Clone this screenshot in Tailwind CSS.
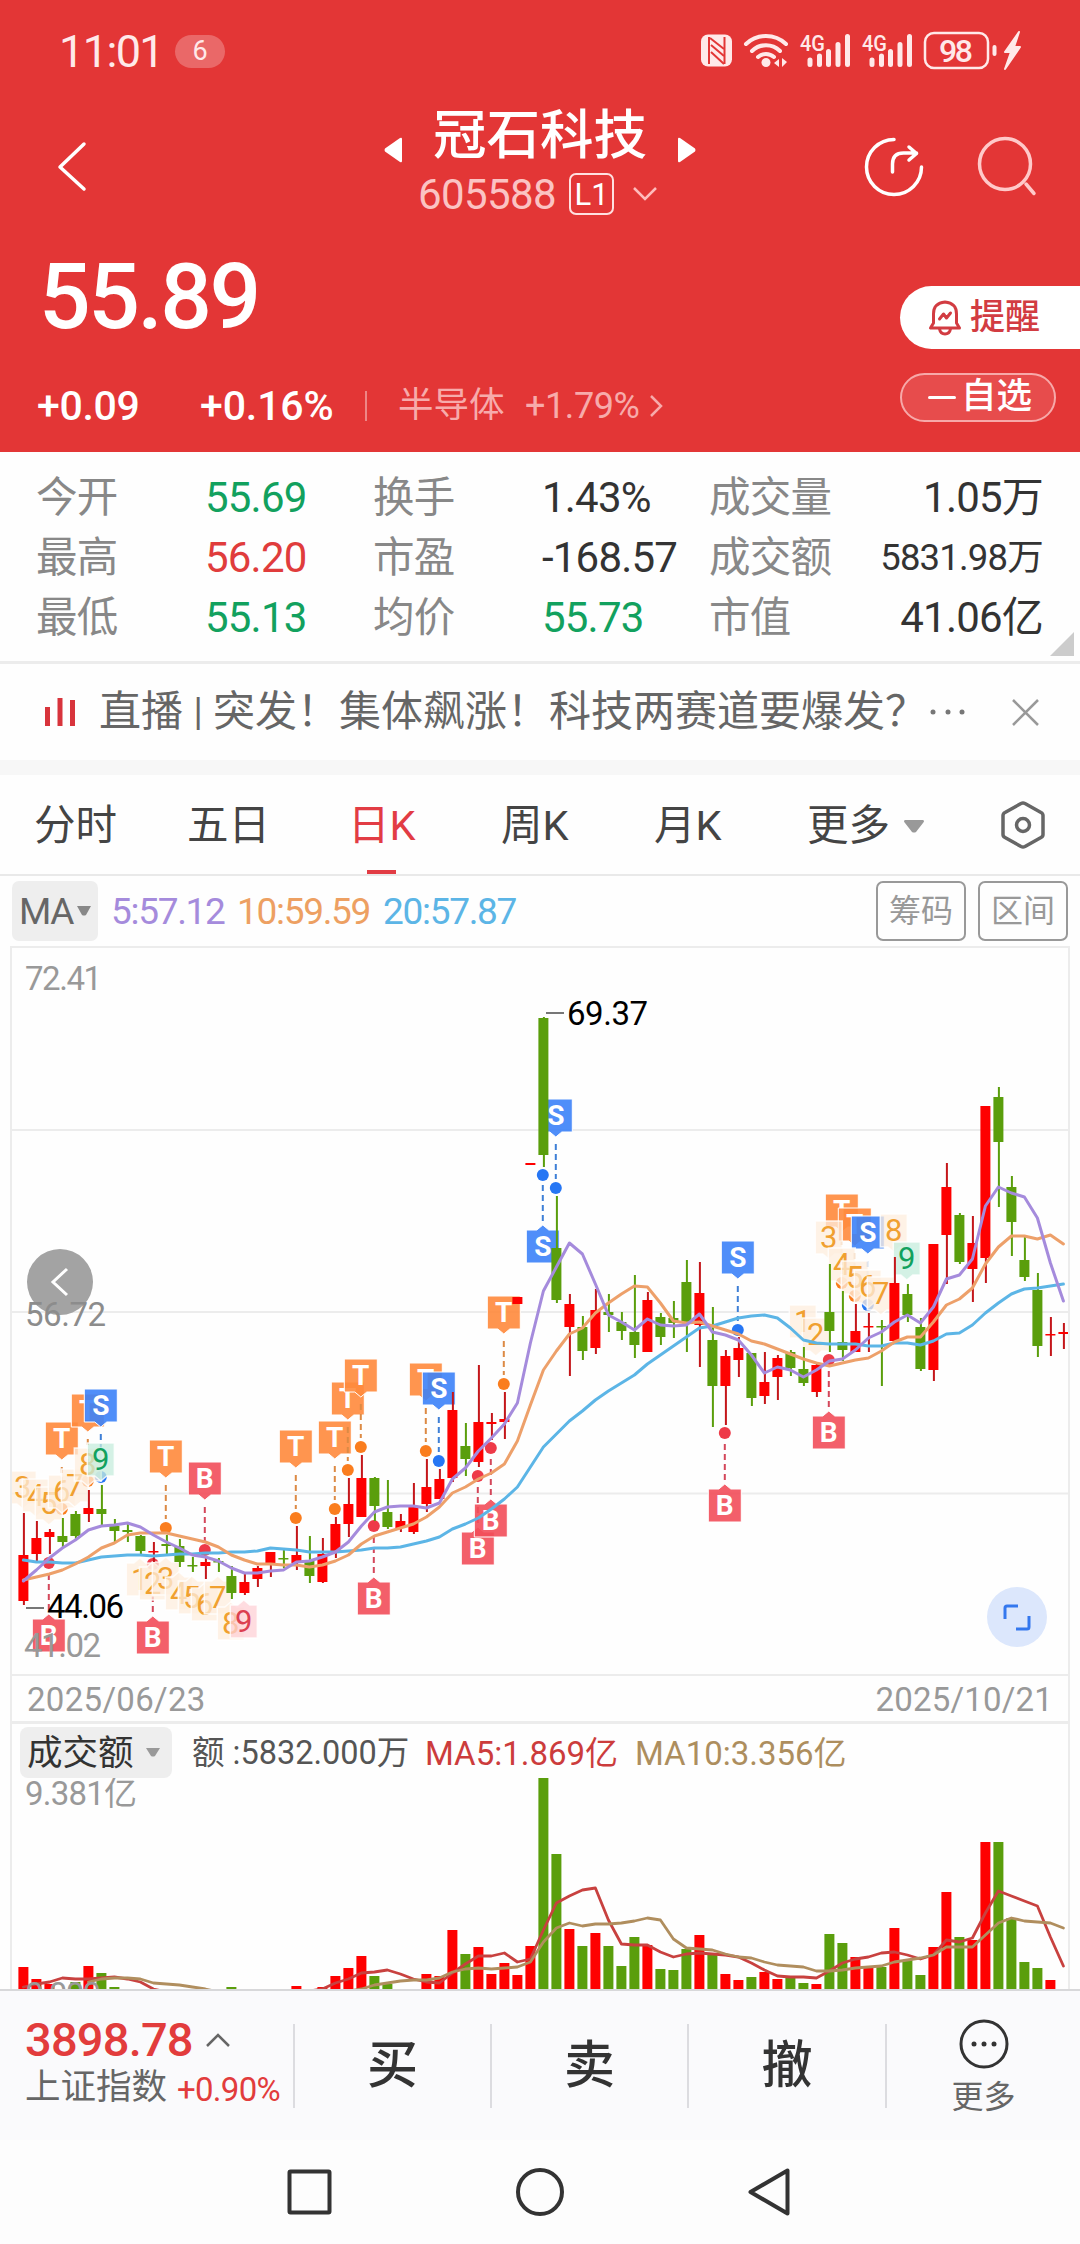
<!DOCTYPE html>
<html lang="zh-CN">

<head>
  <meta charset="UTF-8">
  <meta name="viewport" content="width=device-width, initial-scale=1.0">
  <title>冠石科技 605588</title>
  <script src="https://cdn.jsdelivr.net/npm/@tailwindcss/browser@4"></script>
</head>

<body class="w-[1080px] h-[2244px] overflow-hidden bg-[#fefefe] font-['Roboto','Noto_Sans_CJK_SC',sans-serif] leading-none text-[#333] whitespace-nowrap">

  <header class="h-[452px] bg-[#e33636] text-white">
    <!-- Status bar -->
    <div class="h-[102px] pl-[59px] pr-[58px] flex items-center justify-between text-[#ffe9e9]">
      <div class="flex items-center gap-[12px]">
        <span class="text-[45px] tracking-[-1.6px] w-[104px]">11:01</span>
        <span class="w-[50px] h-[33px] rounded-full bg-white/25 text-[27px] flex items-center justify-center">6</span>
      </div>
      <svg width="322" height="40" viewBox="700 31 322 40" fill="none" stroke="currentColor">
        <rect x="701" y="34.500" width="31" height="32" rx="7" fill="currentColor" stroke="none" />
        <path d="M709 64V37M724.500 64V37" stroke="#e33636" stroke-width="2" />
        <path d="M710 38l14 11M711 45l13 11M711 52l13 12" stroke="#e33636" stroke-width="2" />
        <path d="M746 44a29 29 0 0 1 40 0M752 51a20 20 0 0 1 28 0M758 57a12 12 0 0 1 16 0" stroke-width="4" stroke-linecap="round" />
        <circle cx="766" cy="62.500" r="4.500" fill="currentColor" stroke="none" />
        <path d="M779 59v8l-5-4zM782 58v9l5-5z" fill="currentColor" stroke="none" />
        <g font-size="22" font-weight="500" fill="currentColor" stroke="none">
          <text x="800" y="50.500" textLength="25" lengthAdjust="spacingAndGlyphs">4G</text>
          <text x="862" y="50.500" textLength="25" lengthAdjust="spacingAndGlyphs">4G</text>
        </g>
        <path d="M810 60v4.500M819.500 56v8.500M828.500 51.500v13M838 44.500v20M847.500 36.500v28M872 60v4.500M881.500 56v8.500M890.500 51.500v13M900 44.500v20M909.500 36.500v28" stroke-width="5" stroke-linecap="round" />
        <rect x="925" y="33" width="63" height="35" rx="9" stroke-width="2.500" />
        <rect x="992.500" y="45" width="4" height="11" rx="2" fill="currentColor" stroke="none" />
        <text x="939" y="61.500" font-size="32" font-weight="500" fill="currentColor" stroke="none" textLength="34">98</text>
        <path d="M1019 32l-14 20h6l-6 17 15-22h-6z" fill="currentColor" stroke-width="2" stroke-linejoin="round" />
      </svg>
    </div>

    <!-- Title -->
    <div class="h-[130px] grid grid-cols-[384px_312px_1fr] items-center">
      <svg class="ml-[56px]" width="32" height="52" viewBox="0 0 32 52" fill="none" stroke="currentColor" stroke-width="3.500" stroke-linecap="round" stroke-linejoin="round">
        <path d="M28 3L4 26l24 22" />
      </svg>
      <div class="flex flex-col h-full">
        <div class="h-[70px] pt-[2px] flex items-center justify-between">
          <svg class="mt-[24px]" width="18" height="28" viewBox="0 0 18 28" fill="currentColor"><path d="M18 3v22q0 2-2 1L1 15.500q-1-1.500 0-3L16 2q2-1 2 1z" /></svg>
          <span class="text-[53.500px] font-medium mb-[5px]">冠石科技</span>
          <svg class="mt-[24px]" width="18" height="28" viewBox="0 0 18 28" fill="currentColor"><path d="M0 3v22q0 2 2 1l15-10.500q1-1.500 0-3L2 2Q0 1 0 3z" /></svg>
        </div>
        <div class="h-[44px] pl-[34px] flex items-center">
          <span class="text-[42px] w-[151px] pt-[2px] tracking-[-0.6px] text-[#fbc3c3]">605588</span>
          <span class="w-[45px] h-[42px] border-2 border-[#ffe0e0] rounded-[7px] text-[31px] flex items-center justify-center">L1</span>
          <svg class="ml-[18px]" width="26" height="16" viewBox="0 0 26 16" fill="none" stroke="#fbb" stroke-width="2.500"><path d="M2 2l11 11L24 2" /></svg>
        </div>
      </div>
      <svg class="ml-[168px]" width="174" height="64" viewBox="864 135 174 64" fill="none" stroke="currentColor" stroke-linecap="round" stroke-linejoin="round">
        <path d="M894 139.500a27.500 27.500 0 1 0 27.500 27.500" stroke-width="3.500" />
        <path d="M892.500 172v-8q0-11 11-11h13M909 147l7.500 6.500-7.500 6.500" stroke-width="3.500" />
        <g stroke="#ffc9c9" stroke-width="3.500">
          <circle cx="1005" cy="164" r="25.500" />
          <path d="M1026 184l8 9.500" />
        </g>
      </svg>
    </div>

    <!-- Price -->
    <div class="h-[220px] flex justify-between">
      <div>
        <div class="h-[125px] pl-[39px] pt-[6px] flex items-center text-[91px] font-medium tracking-[-2.5px]">55.89</div>
        <div class="h-[95px] pt-[3px] pl-[37px] flex items-center">
          <span class="w-[163px] text-[41px] font-medium tracking-[-0.3px]">+0.09</span>
          <span class="w-[165px] text-[41px] font-medium tracking-[-0.1px]">+0.16%</span>
          <span class="w-[2px] h-[30px] bg-white/40"></span>
          <span class="ml-[31px] w-[127px] text-[35.500px] text-[#f7abab]">半导体</span>
          <span class="w-[124px] text-[36px] tracking-[-0.4px] text-[#f7abab]">+1.79%</span>
          <svg width="14" height="24" viewBox="0 0 14 24" fill="none" stroke="#f7abab" stroke-width="2.500"><path d="M2 2l10 10L2 22" /></svg>
        </div>
      </div>
      <div class="w-[180px] pt-[54px] flex flex-col">
        <div class="h-[63px] pl-[28px] rounded-l-full bg-white text-[#d23c42] flex items-center gap-[8px]">
          <svg width="34" height="36" viewBox="0 0 34 36" fill="none" stroke="currentColor" stroke-width="3" stroke-linejoin="round" stroke-linecap="round">
            <path d="M2.500 28h29l-3-5v-9q0-11-11.500-12Q5.500 3 5.500 14v9zM11.500 29q1 5 5.500 5t5.500-5M11.500 19l4-5 3 4 4-5" />
          </svg>
          <span class="text-[35px] font-medium">提醒</span>
        </div>
        <div class="mt-[24px] w-[156px] h-[49px] pl-[26px] rounded-full border-2 border-[#f7a9a9] bg-[#e74c4c] flex items-center gap-[5px]">
          <span class="w-[28px] h-[3px] rounded bg-white"></span>
          <span class="text-[35.500px] font-medium mb-[2px]">自选</span>
        </div>
      </div>
    </div>
  </header>

  <!-- Quote figures -->
  <section class="relative h-[212px] pt-[16px] pl-[36px] pr-[37px] border-b-3 border-[#ececec] text-[42px] tracking-[-0.8px]">
    <div class="grid grid-cols-[169px_168px_169px_167px_140px_1fr] auto-rows-[60px] items-center">
      <span class="text-[#888] text-[41.500px]">今开</span><span class="text-[#12a15e]">55.69</span>
      <span class="text-[#888] text-[41.500px]">换手</span><span>1.43%</span>
      <span class="text-[#888] text-[41.500px]">成交量</span><span class="text-right">1.05万</span>
      <span class="text-[#888] text-[41.500px]">最高</span><span class="text-[#e03c3c]">56.20</span>
      <span class="text-[#888] text-[41.500px]">市盈</span><span>-168.57</span>
      <span class="text-[#888] text-[41.500px]">成交额</span><span class="text-right text-[36.500px]">5831.98万</span>
      <span class="text-[#888] text-[41.500px]">最低</span><span class="text-[#12a15e]">55.13</span>
      <span class="text-[#888] text-[41.500px]">均价</span><span class="text-[#12a15e]">55.73</span>
      <span class="text-[#888] text-[41.500px]">市值</span><span class="text-right">41.06亿</span>
    </div>
    <svg class="absolute right-[6px] bottom-[5px]" width="24" height="24"><path d="M24 0v24H0z" fill="#ccc" /></svg>
  </section>

  <!-- Live banner -->
  <section class="h-[96px] pl-[44px] pr-[41px] flex items-center text-[42px] text-[#666]">
    <svg width="32" height="28" viewBox="0 0 32 28" stroke="#d8343c" stroke-width="5"><path d="M3.500 9v19M16 0v28M28.500 2v26" /></svg>
    <span class="ml-[23px]">直播</span>
    <span class="w-[30px] text-center text-[38px]">|</span>
    <span>突发！集体飙涨！科技两赛道要爆发？</span>
    <svg class="ml-[1px]" width="40" height="6" fill="#777"><circle cx="5" cy="3" r="2.500" /><circle cx="20" cy="3" r="2.500" /><circle cx="34" cy="3" r="2.500" /></svg>
    <svg class="ml-auto" width="27" height="27" viewBox="0 0 27 27" stroke="#999" stroke-width="2.500"><path d="M1 1l25 25M26 1L1 26" /></svg>
  </section>
  <div class="h-[15px] bg-[#f7f7f7]"></div>

  <!-- Period tabs -->
  <nav class="h-[101px] pl-[34px] border-b-2 border-[#e9e9e9] flex items-center text-[41.500px] text-[#444]">
    <span class="w-[153px] pt-[2px]">分时</span>
    <span class="w-[161px] pt-[2px]">五日</span>
    <span class="w-[153px] h-full pt-[2px] relative flex items-center text-[#e23c44]">日K<i class="absolute left-[19px] bottom-0 w-[29px] h-[4px] bg-[#e23c44]"></i></span>
    <span class="w-[153px] pt-[2px]">周K</span>
    <span class="w-[153px] pt-[2px]">月K</span>
    <span class="w-[97px] pt-[2px]">更多</span>
    <svg class="mt-[4px]" width="20" height="13"><path d="M1 0h18q2 1 0 3l-7 9q-2 1-4 0L1 3q-2-2 0-3z" fill="#999" /></svg>
    <svg class="ml-[76px]" width="46" height="50" viewBox="0 0 46 50" fill="none" stroke="#666" stroke-width="3.500" stroke-linejoin="round"><path d="M21 3.500q2-1 4 0l16 9q2 1 2 3v19q0 2-2 3l-16 9q-2 1-4 0l-16-9q-2-1-2-3v-19q0-2 2-3z" /><circle cx="23" cy="25" r="6.500" /></svg>
  </nav>

  <!-- Moving averages -->
  <div class="h-[70px] pl-[12px] pr-[12px] flex items-center text-[37px] tracking-[-1.3px]">
    <div class="w-[86px] h-[60px] pl-[7px] rounded-[7px] bg-[#eee] text-[#666] flex items-center gap-[4px]">
      <span>MA</span>
      <svg width="14" height="10"><path d="M0 0h14l-5 9q-2 1-4 0z" fill="#888" /></svg>
    </div>
    <span class="ml-[13px] w-[126px] text-[#a58bdc]">5:57.12</span>
    <span class="w-[146px] text-[#eda062]">10:59.59</span>
    <span class="text-[#5cb5e6]">20:57.87</span>
    <span class="ml-auto w-[90px] h-[60px] border-2 border-[#999] rounded-[7px] text-[32px] tracking-normal text-[#999] flex items-center justify-center">筹码</span>
    <span class="ml-[12px] w-[90px] h-[60px] border-2 border-[#999] rounded-[7px] text-[32px] tracking-normal text-[#999] flex items-center justify-center">区间</span>
  </div>

  <!-- Charts -->
  <main class="mx-[10px] h-[1043px] border-x-2 border-[#ececec]">
    <svg id="kline" width="1056" height="730" viewBox="12 946 1056 730"></svg>
    <div class="h-[48px] px-[15px] pt-[2px] border-b-3 border-[#ececec] flex items-center justify-between text-[33px] text-[#999]">
      <span class="tracking-[0.300px]">2025/06/23</span>
      <span class="tracking-[0.200px]">2025/10/21</span>
    </div>
    <div class="h-[54px] pt-[3px] pl-[8px] flex items-center text-[33px]">
      <div class="w-[152px] h-[51px] pl-[7px] rounded-[8px] bg-[#eee] flex items-center justify-between pr-[12px] text-[35.500px]">
        <span class="pt-[2px]">成交额</span>
        <svg width="14" height="9"><path d="M0 0h14L9 8q-2 1-4 0z" fill="#999" /></svg>
      </div>
      <span class="ml-[20px] w-[233px] pt-[2px] text-[32.500px] text-[#555]">额 :5832.000万</span>
      <span class="w-[210px] pt-[2px] text-[#cc3c3c]">MA5:1.869亿</span>
      <span class="pt-[2px] text-[#ad8e5e]">MA10:3.356亿</span>
    </div>
    <svg id="volume" width="1056" height="211" viewBox="12 1778 1056 211"></svg>
  </main>

  <!-- Trade bar -->
  <footer class="h-[151px] border-t-2 border-[#d8d8da] bg-[#fafafc] flex items-center">
    <div class="w-[293px] pl-[25px] pb-[9px] flex flex-col gap-[7px]">
      <div class="flex items-center gap-[14px] text-[47px] font-medium text-[#e23c3c] tracking-[-0.8px]">
        <span class="w-[167px]">3898.78</span>
        <svg width="24" height="14" viewBox="0 0 24 14" fill="none" stroke="#666" stroke-width="2.500"><path d="M1 13L12 2l11 11" /></svg>
      </div>
      <div class="flex items-center text-[35.500px] text-[#666]">
        <span class="w-[152px]">上证指数</span>
        <span class="pt-[2px] text-[33px] text-[#e23c3c] tracking-[-0.700px]">+0.90%</span>
      </div>
    </div>
    <div class="w-[197px] h-[84px] border-l-2 border-[#dcdce0] flex items-center justify-center text-[51px] font-medium">买</div>
    <div class="w-[197px] h-[84px] border-l-2 border-[#dcdce0] flex items-center justify-center text-[51px] font-medium">卖</div>
    <div class="w-[198px] h-[84px] border-l-2 border-[#dcdce0] flex items-center justify-center text-[51px] font-medium">撤</div>
    <div class="flex-1 h-[84px] border-l-2 border-[#dcdce0] flex flex-col items-center justify-center gap-[11px] text-[32px] text-[#666]">
      <svg class="shrink-0" width="52" height="52" viewBox="0 0 52 52" fill="#333"><circle cx="26" cy="26" r="23" fill="none" stroke="#333" stroke-width="3" /><circle cx="16" cy="26" r="2.500" /><circle cx="26" cy="26" r="2.500" /><circle cx="36" cy="26" r="2.500" /></svg>
      <span>更多</span>
    </div>
  </footer>

  <!-- System navigation -->
  <div class="h-[104px] bg-[#fdfdfd] pl-[286px] flex items-center">
    <svg width="508" height="48" viewBox="286 2168 508 48" fill="none" stroke="#333" stroke-width="4" stroke-linejoin="round">
      <rect x="289.500" y="2171.500" width="40" height="41" rx="1" />
      <circle cx="540" cy="2192" r="22" />
      <path d="M787.500 2170.500v43L750.500 2192z" />
    </svg>
  </div>

  <script>
    const RED = '#fe0000';
    const GREEN = '#5a9e0c';
    const STEP = 13;
    const X0 = 23.4;
    const cx = i => X0 + i * STEP;

    // colour, high, low, body top, body bottom
    const candles = [
      ['r', 1513, 1605, 1555, 1601], ['r', 1521, 1562, 1538, 1554], ['r', 1529, 1554, 1532, 1537], ['g', 1518, 1547, 1536, 1542],
      ['g', 1511, 1540, 1514, 1536], ['r', 1490, 1522, 1508, 1514], ['g', 1485, 1525, 1509, 1514], ['g', 1519, 1542, 1526, 1531],
      ['g', 1522, 1542, 1530, 1532], ['g', 1535, 1554, 1536, 1551], ['r', 1542, 1562, 1551, 1552], ['g', 1535, 1554, 1544, 1546],
      ['g', 1539, 1567, 1546, 1562], ['g', 1557, 1572, 1565, 1566], ['r', 1557, 1579, 1562, 1566], ['g', 1558, 1572, 1561, 1562],
      ['g', 1566, 1599, 1576, 1593], ['r', 1574, 1595, 1582, 1593], ['r', 1566, 1587, 1568, 1579], ['r', 1552, 1577, 1552, 1563],
      ['g', 1550, 1568, 1558, 1559], ['r', 1526, 1570, 1555, 1563], ['g', 1536, 1583, 1560, 1576], ['r', 1538, 1583, 1554, 1582],
      ['r', 1517, 1558, 1524, 1551], ['r', 1478, 1537, 1504, 1524], ['r', 1455, 1517, 1478, 1517], ['g', 1477, 1521, 1478, 1506],
      ['g', 1480, 1529, 1512, 1527], ['r', 1514, 1532, 1521, 1528], ['r', 1483, 1534, 1507, 1532], ['r', 1459, 1512, 1487, 1504],
      ['r', 1469, 1499, 1479, 1499], ['r', 1392, 1482, 1410, 1478], ['g', 1423, 1476, 1446, 1459], ['r', 1365, 1467, 1422, 1462],
      ['r', 1413, 1440, 1422, 1424], ['r', 1392, 1439, 1419, 1422], ['r', 1297, 1304, 1297, 1304], ['r', 1163, 1165, 1163, 1165],
      ['g', 1017, 1167, 1018, 1155], ['g', 1196, 1303, 1248, 1300], ['r', 1294, 1376, 1304, 1327], ['g', 1316, 1360, 1327, 1351],
      ['r', 1289, 1354, 1310, 1348], ['g', 1294, 1332, 1312, 1315], ['g', 1312, 1340, 1322, 1331], ['g', 1275, 1358, 1332, 1345],
      ['r', 1292, 1352, 1300, 1352], ['g', 1313, 1345, 1317, 1337], ['g', 1301, 1338, 1318, 1323], ['g', 1260, 1352, 1282, 1323],
      ['r', 1262, 1367, 1293, 1325], ['g', 1307, 1427, 1340, 1386], ['r', 1350, 1425, 1356, 1386], ['r', 1337, 1377, 1348, 1360],
      ['g', 1353, 1406, 1353, 1398], ['r', 1352, 1404, 1382, 1396], ['r', 1355, 1400, 1358, 1377], ['g', 1350, 1376, 1352, 1368],
      ['g', 1347, 1386, 1369, 1383], ['r', 1362, 1397, 1365, 1392], ['g', 1264, 1352, 1312, 1331], ['g', 1291, 1361, 1342, 1350],
      ['r', 1304, 1352, 1331, 1352], ['r', 1313, 1352, 1326, 1327], ['g', 1320, 1386, 1326, 1327], ['r', 1257, 1342, 1283, 1341],
      ['g', 1284, 1322, 1294, 1315], ['g', 1318, 1371, 1327, 1369], ['r', 1244, 1381, 1244, 1370], ['r', 1163, 1284, 1187, 1235],
      ['g', 1213, 1264, 1215, 1262], ['r', 1216, 1302, 1243, 1269], ['r', 1106, 1283, 1106, 1258], ['g', 1087, 1207, 1097, 1142],
      ['g', 1176, 1256, 1187, 1222], ['g', 1237, 1281, 1260, 1277], ['g', 1273, 1357, 1290, 1346], ['r', 1317, 1356, 1334, 1335],
      ['r', 1323, 1349, 1332, 1334]
    ];

    const ma5 = [1581, 1570, 1558, 1548, 1540, 1530, 1526, 1525, 1523, 1527, 1535, 1542, 1548, 1555, 1557, 1561, 1568, 1573, 1573, 1571, 1570,
      1562, 1561, 1557, 1552, 1542, 1526, 1512, 1507, 1506, 1506, 1508, 1503, 1479, 1468, 1451, 1438, 1424, 1403, 1343, 1291, 1267, 1243,
      1254, 1284, 1315, 1322, 1330, 1319, 1325, 1326, 1325, 1314, 1332, 1335, 1340, 1355, 1373, 1367, 1370, 1377, 1370, 1361, 1359, 1350,
      1338, 1332, 1322, 1315, 1323, 1307, 1279, 1275, 1259, 1206, 1187, 1193, 1197, 1218, 1263, 1301];
    const ma10 = [1580, 1577, 1574, 1570, 1564, 1557, 1548, 1543, 1535, 1533, 1533, 1533, 1536, 1539, 1542, 1547, 1555, 1560, 1564, 1564, 1565,
      1565, 1567, 1565, 1561, 1555, 1544, 1536, 1532, 1528, 1524, 1517, 1507, 1493, 1487, 1479, 1473, 1464, 1441, 1405, 1370, 1351, 1334,
      1328, 1313, 1303, 1294, 1286, 1287, 1303, 1321, 1323, 1322, 1326, 1330, 1334, 1341, 1344, 1349, 1354, 1359, 1363, 1366, 1363, 1360,
      1358, 1351, 1342, 1337, 1337, 1322, 1305, 1299, 1288, 1264, 1247, 1236, 1236, 1239, 1235, 1244];
    const ma20 = [1560, 1562, 1562, 1563, 1563, 1560, 1557, 1556, 1555, 1555, 1556, 1555, 1554, 1554, 1553, 1553, 1552, 1552, 1551, 1548, 1549,
      1550, 1552, 1552, 1552, 1551, 1550, 1548, 1548, 1547, 1544, 1541, 1537, 1529, 1524, 1518, 1509, 1499, 1487, 1467, 1447, 1434, 1421,
      1411, 1400, 1391, 1383, 1375, 1364, 1355, 1346, 1337, 1328, 1326, 1322, 1318, 1316, 1315, 1318, 1328, 1340, 1343, 1344, 1344, 1344,
      1346, 1346, 1343, 1343, 1345, 1341, 1334, 1333, 1325, 1313, 1303, 1294, 1289, 1288, 1286, 1284];

    // letter, index, box top, points up, dot y
    const flags = [
      ['T', 3, 1422, 0, 1509], ['T', 5, 1394, 0, 1481], ['S', 6, 1389, 0, 1477], ['T', 11, 1440, 0, 1528], ['B', 14, 1462, 0, 1550],
      ['T', 21, 1430, 0, 1518], ['T', 24, 1421, 0, 1509], ['T', 25, 1382, 0, 1470], ['T', 26, 1359, 0, 1447], ['B', 27, 1582, 1, 1526],
      ['T', 31, 1363, 0, 1451], ['S', 32, 1372, 0, 1461], ['B', 35, 1532, 1, 1476], ['B', 36, 1504, 1, 1448], ['T', 37, 1296, 0, 1384],
      ['S', 40, 1230, 1, 1175], ['S', 41, 1099, 0, 1188], ['B', 54, 1489, 1, 1433], ['S', 55, 1241, 0, 1330], ['B', 2, 1619, 1, 1563],
      ['B', 10, 1621, 1, 1564], ['B', 62, 1416, 1, 1360], ['T', 63, 1194, 0, 1283], ['T', 64, 1208, 0, 1296], ['S', 65, 1216, 0, 1305]
    ];
    const flagColors = { T: ['#ff8a3c', '#fa7d1e', '#dc8a44'], S: ['#3c82f8', '#2676f4', '#3e7fd6'], B: ['#f24e5a', '#ee3a48', '#d4475a'] };

    // digit, index, box top, points up
    const counts = [
      [3, 0, 1471, 0], [4, 1, 1479, 0], [5, 2, 1487, 0], [6, 3, 1475, 0], [7, 4, 1469, 0], [8, 5, 1448, 0], [9, 6, 1443, 0],
      [1, 9, 1563, 1], [2, 10, 1567, 1], [3, 11, 1562, 1], [4, 12, 1577, 1], [5, 13, 1581, 1], [6, 14, 1588, 1], [7, 15, 1581, 1],
      [8, 16, 1607, 1], [9, 17, 1605, 1],
      [1, 60, 1305, 0], [2, 61, 1318, 0], [3, 62, 1221, 0], [4, 63, 1248, 0], [5, 64, 1261, 0], [6, 65, 1270, 0], [7, 66, 1277, 0],
      [8, 67, 1214, 0], [9, 68, 1242, 0]
    ];

    function polyline(ys, color, width, start = 0) {
      const pts = ys.map((y, i) => cx(i + start) + ',' + y).join(' ');
      return `<polyline points="${pts}" fill="none" stroke="${color}" stroke-width="${width}" stroke-linejoin="round" stroke-linecap="round"/>`;
    }

    function label(x, y, str, width, color) {
      return `<text x="${x}" y="${y}" font-size="33" fill="${color}" textLength="${width}">${str}</text>`;
    }

    function bubble(x, top, w, h, up) {
      const l = x - w / 2, r = x + w / 2, b = top + h;
      return up
        ? `M${l} ${top}H${x - 6}L${x} ${top - 5}L${x + 6} ${top}H${r}V${b}H${l}Z`
        : `M${l} ${top}H${r}V${b}H${x + 6}L${x} ${b + 5}L${x - 6} ${b}H${l}Z`;
    }

    let k = '';
    [947, 1130, 1312, 1493.5, 1675].forEach(y => k += `<rect x="12" y="${y - 1}" width="1056" height="2" fill="#ececec"/>`);

    flags.forEach(([t, i, top, up, dot]) => {
      const [fill, dotFill, line] = flagColors[t];
      const x = cx(i) - 0.6;
      const from = up ? top - 9 : top + 45;
      const to = up ? dot + 10 : dot - 9;
      k += `<path d="M${x} ${from}V${to}" stroke="${line}" stroke-width="2" stroke-dasharray="6 4"/>`;
      k += `<circle cx="${x}" cy="${dot}" r="6" fill="${dotFill}"/>`;
      k += `<path d="${bubble(x, top, 33, 33, up)}" fill="${fill}" fill-opacity=".9" stroke="#fff" stroke-width="1" stroke-linejoin="round"/>`;
      k += `<text x="${x}" y="${top + 26}" font-size="28" font-weight="700" fill="#fff" text-anchor="middle">${t}</text>`;
    });

    counts.forEach(([n, i, top, up]) => {
      const x = cx(i) - 0.6;
      let bg = '#fdeedd', fg = '#f0a030';
      if (n === 9) {
        bg = up ? '#fdd0d6' : '#c6ecdc';
        fg = up ? '#dc4050' : '#12a15e';
      }
      k += `<path d="${bubble(x, top, 27, 33, up)}" fill="${bg}" fill-opacity=".75" stroke="#fff" stroke-opacity=".8" stroke-width="1.5"/>`;
      k += `<text x="${x}" y="${top + 27}" font-size="31" fill="${fg}" text-anchor="middle">${n}</text>`;
    });

    candles.forEach(([c, hi, lo, top, bottom], i) => {
      const x = cx(i), color = c === 'r' ? RED : GREEN;
      k += `<rect x="${x - 0.5}" y="${hi}" width="2" height="${lo - hi}" fill="${c === 'r' ? '#c4161a' : GREEN}"/>`;
      k += `<rect x="${x - 5}" y="${top}" width="10" height="${Math.max(1.5, bottom - top)}" fill="${color}"/>`;
    });

    k += polyline(ma20, '#5cb5e6', 3) + polyline(ma10, '#eda06a', 3) + polyline(ma5, '#a58bdc', 3);

    // Scroll-back button
    k += '<circle cx="60" cy="1282" r="33" fill="#a3a3a3"/><path d="M67 1269l-14 13 14 13" fill="none" stroke="#fff" stroke-width="3"/>';
    k += label(25, 990, '72.41', 77, '#999') + label(25, 1326, '56.72', 81, '#8c8c8c') + label(24, 1657, '41.02', 77, '#999');
    k += '<path d="M26 1608h18M546 1013h18" stroke="#777" stroke-width="2"/>';
    k += label(47, 1618, '44.06', 77, '#000') + label(567, 1025, '69.37', 81, '#000');

    // Full-screen button
    k += '<circle cx="1017" cy="1617" r="30" fill="#dce7fc"/>';
    k += '<path d="M1018 1606h-11q-2 0-2 2v11M1016 1629h11q2 0 2-2v-11" fill="none" stroke="#3478ee" stroke-width="3"/>';
    document.getElementById('kline').innerHTML = k;

    // colour and bar top; null where the bar is too short to show
    const volumes = [
      'r1967', 'r1979', 'r1984', null, 'g1982', 'r1966', 'g1973', 'g1987', null, null, null, null, null, null, null, null, 'g1987',
      null, null, null, null, 'r1986', null, 'r1987', 'r1976', 'r1968', 'r1956', 'g1976', 'g1984', null, null, 'r1974', 'r1976', 'r1930',
      'g1954', 'r1947', 'r1974', 'r1963', 'r1975', 'r1946', 'g1778', 'g1854', 'r1929', 'g1946', 'r1933', 'g1946', 'g1966', 'g1937',
      'r1945', 'g1969', 'g1970', 'g1949', 'r1935', 'g1954', 'r1974', 'r1980', 'g1977', 'r1972', 'r1979', 'g1977', 'g1983', 'r1984',
      'g1934', 'g1943', 'r1957', 'r1967', 'g1967', 'r1928', 'g1960', 'g1975', 'r1947', 'r1892', 'g1937', 'r1940', 'r1842', 'g1842',
      'g1918', 'g1962', 'g1968', 'r1980', null
    ];
    const vol5 = [1987, 1984, 1982, 1978, 1979, 1979, 1978, 1977, 1979, 1982, 1989, 1992, 1993, 1993, 1993, 1993, 1993, 1993, 1993, 1993, 1993,
      1992, 1991, 1989, 1983, 1979, 1973, 1972, 1970, 1974, 1979, 1982, 1983, 1973, 1964, 1956, 1956, 1953, 1962, 1959, 1930, 1903, 1896,
      1890, 1888, 1920, 1944, 1945, 1945, 1952, 1957, 1954, 1953, 1954, 1955, 1957, 1963, 1970, 1976, 1977, 1977, 1978, 1971, 1963, 1959,
      1957, 1953, 1952, 1955, 1959, 1955, 1940, 1942, 1938, 1913, 1891, 1896, 1901, 1906, 1937, 1966];
    const vol10 = [1982, 1979, 1978, 1978, 1979, 1983, 1984, 1985, 1987, 1989, 1992, 1993, 1993, 1993, 1993, 1993, 1993, 1993, 1993, 1992,
      1991, 1989, 1985, 1983, 1981, 1980, 1980, 1978, 1972, 1969, 1968, 1969, 1968, 1967, 1962, 1942, 1928, 1923, 1926, 1924, 1924, 1923,
      1921, 1918, 1920, 1939, 1948, 1949, 1950, 1954, 1957, 1958, 1962, 1965, 1966, 1967, 1971, 1971, 1970, 1968, 1967, 1966, 1962, 1960,
      1958, 1955, 1947, 1947, 1947, 1935, 1923, 1918, 1921, 1922, 1923, 1928];

    let v = '';
    volumes.forEach((item, i) => {
      if (!item) return;
      const y = Number(item.slice(1));
      v += `<rect x="${cx(i) - 5}" y="${y}" width="10" height="${1989 - y}" fill="${item[0] === 'r' ? RED : GREEN}"/>`;
    });
    v += polyline(vol5, '#c8413f', 2.8) + polyline(vol10, '#b08e5e', 2.8, 5);
    v += label(25, 1805, '9.381亿', 112, '#999') + label(25, 2006, '0.000', 76, '#999');
    document.getElementById('volume').innerHTML = v;
  </script>
</body>

</html>
